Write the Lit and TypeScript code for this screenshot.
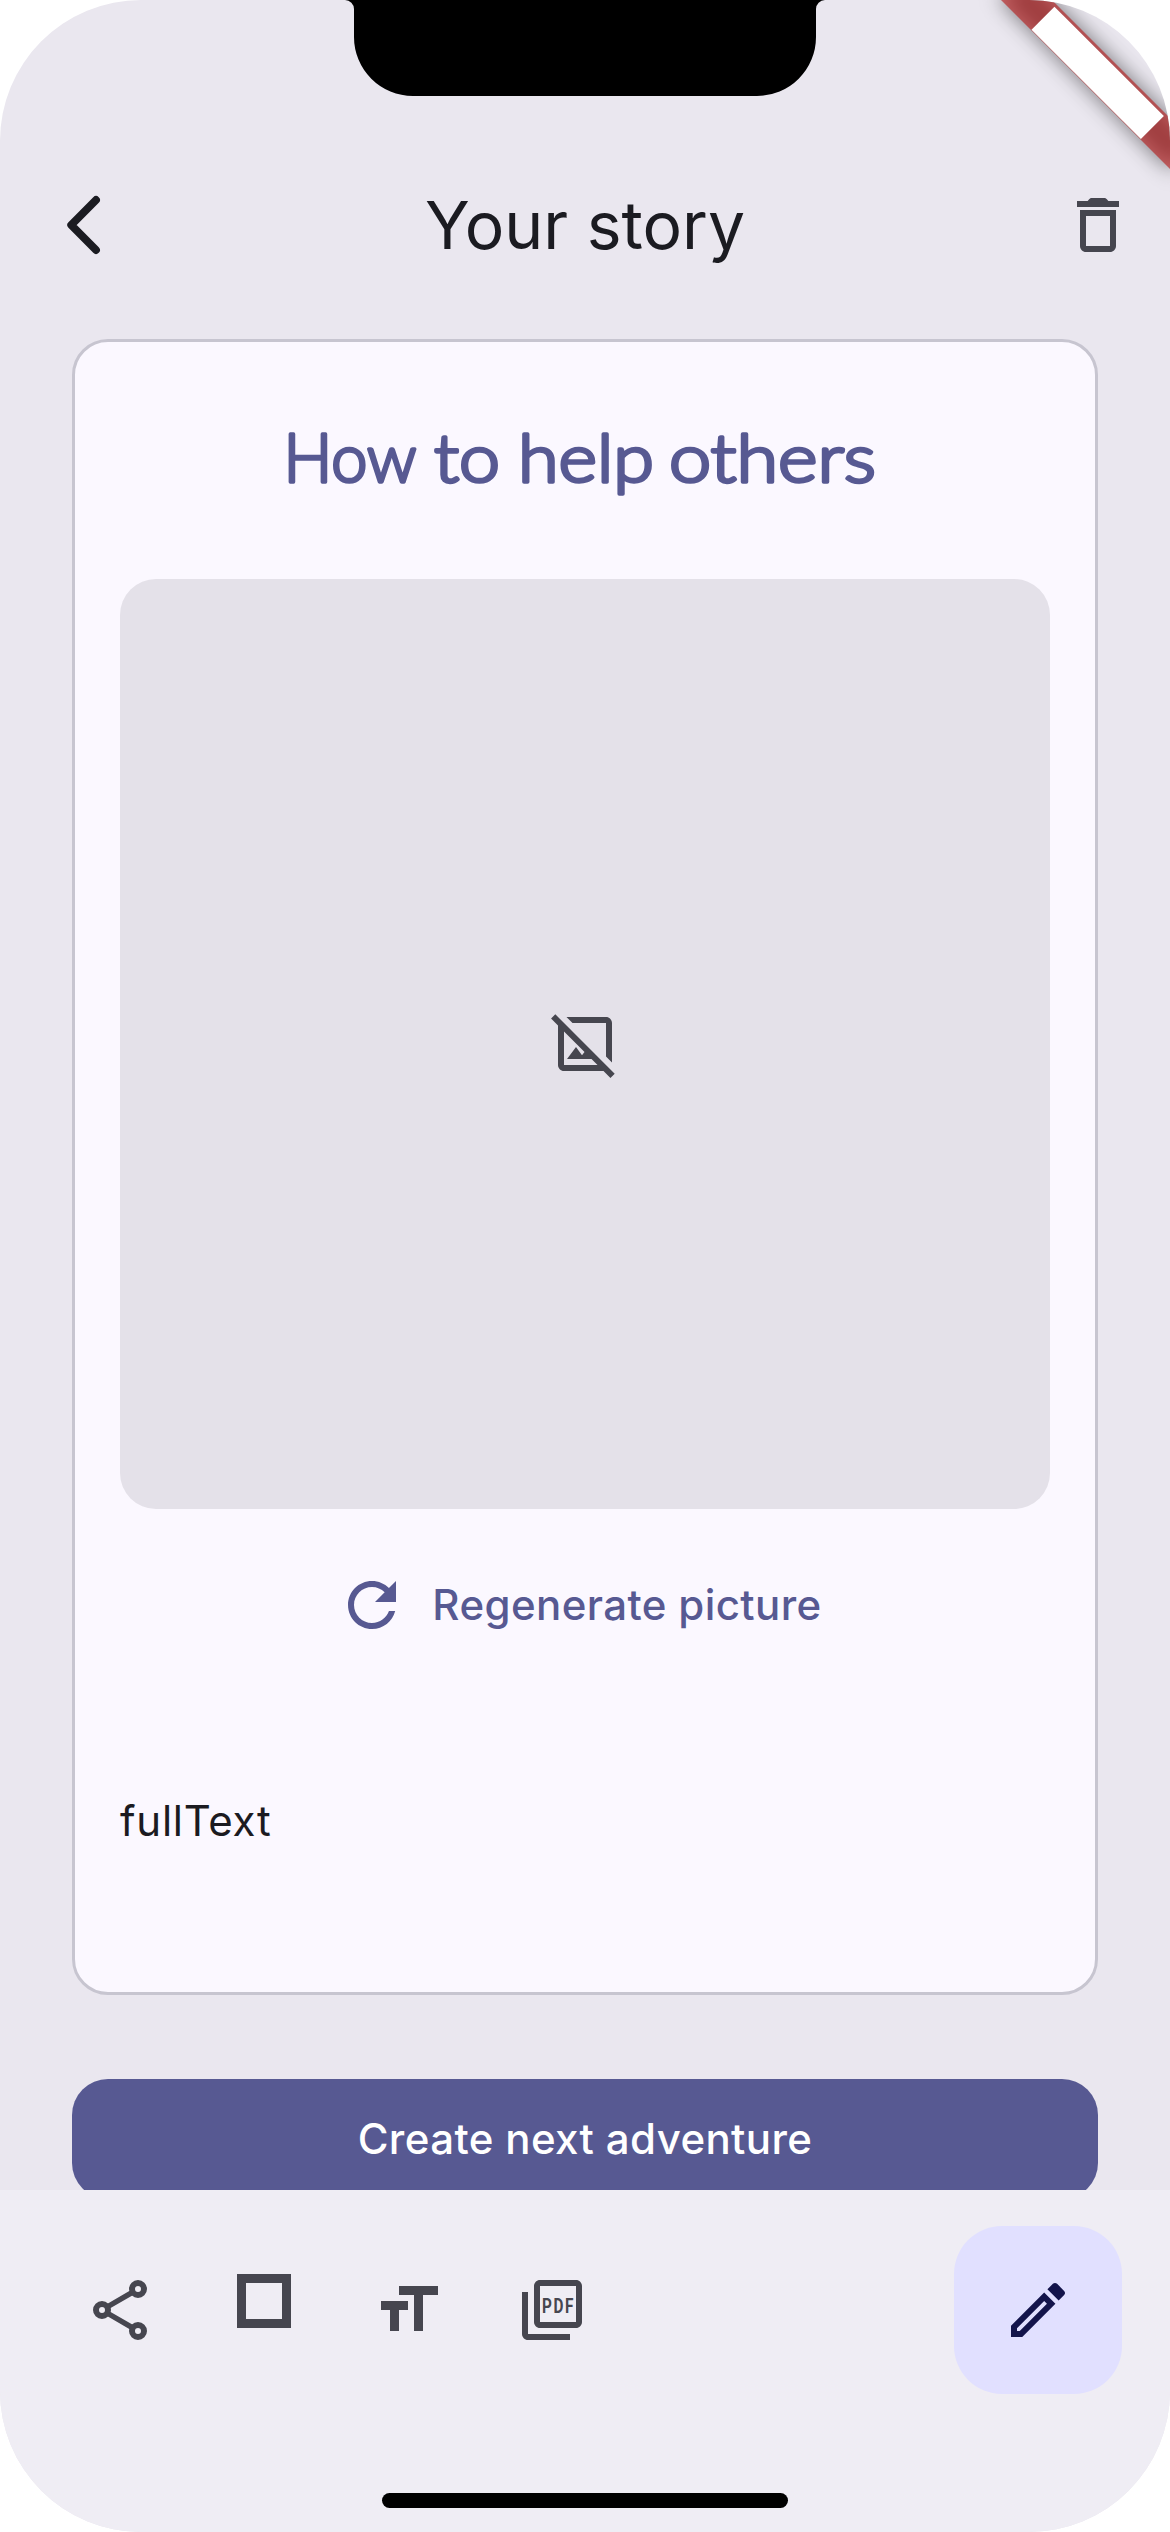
import { LitElement, html, css, svg } from "lit";
import { customElement, property } from "lit/decorators.js";

const icons: Record<string, unknown> = {
  back: svg`<path d="M15.67 3.67 7.4 12l8.27 8.33" fill="none" stroke="currentColor" stroke-width="2.6" stroke-linecap="round" stroke-linejoin="round"/>`,
  trash: svg`<path d="M6 19c0 1.1.9 2 2 2h8c1.1 0 2-.9 2-2V7H6v12zM8 9h8v10H8V9z"/><path d="M5 4h3.55l.5-.55C9.3 3.15 9.6 3 10 3h4c.4 0 .7.15.95.45l.5.55H19v2H5z"/>`,
  noImage: svg`<path d="M21.9 21.9l-8.49-8.49-9.82-9.82L2.1 2.1.69 3.51 3 5.83V19c0 1.1.9 2 2 2h13.17l2.31 2.31 1.42-1.41zM5 19V7.83l6.84 6.84-.84 1.05L9 13l-3 4h8.17l2 2H5zM7.83 5l-2-2H19c1.1 0 2 .9 2 2v13.17l-2-2V5H7.83z"/>`,
  refresh: svg`<path d="M17.65 6.35C16.2 4.9 14.21 4 12 4c-4.42 0-7.99 3.58-7.99 8s3.57 8 7.99 8c3.73 0 6.84-2.55 7.73-6h-2.08c-.82 2.33-3.04 4-5.65 4-3.31 0-6-2.69-6-6s2.69-6 6-6c1.66 0 3.14.69 4.22 1.78L13 11h7V4l-2.35 2.35z"/>`,
  share: svg`<g fill="none" stroke="currentColor"><path d="M16.4 5.95 7.7 11M16.4 18.05 7.7 13" stroke-width="1.8"/><g stroke-width="2"><circle cx="18" cy="5" r="2"/><circle cx="6" cy="12" r="2"/><circle cx="18" cy="19" r="2"/></g></g>`,
  square: svg`<rect x="4.5" y="1.5" width="15" height="15" fill="none" stroke="currentColor" stroke-width="3"/>`,
  textSize: svg`<rect x="9" y="4" width="13" height="3"/><rect x="14" y="4" width="3" height="15"/><rect x="3" y="9" width="9" height="3"/><rect x="6" y="9" width="3" height="10"/>`,
  pdf: svg`<path d="M20 2H8c-1.1 0-2 .9-2 2v12c0 1.1.9 2 2 2h12c1.1 0 2-.9 2-2V4c0-1.1-.9-2-2-2zm0 14H8V4h12v12zM4 6H2v14c0 1.1.9 2 2 2h14v-2H4V6z"/><g transform="scale(.74 1)"><text class="pdf" x="11.75" y="13">PDF</text></g>`,
  edit: svg`<path d="M14.06 9.02l.92.92L5.92 19H5v-.92l9.06-9.06M17.66 3c-.25 0-.51.1-.7.29l-1.83 1.83 3.75 3.75 1.83-1.83c.39-.39.39-1.02 0-1.41l-2.34-2.34c-.2-.2-.45-.29-.71-.29zm-3.6 3.19L3 17.25V21h3.75L17.81 9.94l-3.75-3.75z"/>`,
};

@customElement("app-icon")
export class AppIcon extends LitElement {
  @property() name = "";

  static styles = css`
    :host { display: block; width: 72px; height: 72px; flex: none; }
    .glyph { display: block; width: 72px; height: 72px; fill: currentColor; }
    .pdf { font: 700 6.9px Roboto, "Liberation Sans", sans-serif; letter-spacing: 0.7px; }
  `;

  render() {
    return html`<svg class="glyph" viewBox="0 0 24 24">${icons[this.name]}</svg>`;
  }
}

const titleWords = [
  { text: "How", x: 163.5, width: 133 },
  { text: "to", x: 314, width: 66 },
  { text: "help", x: 398, width: 136 },
  { text: "others", x: 549, width: 207 },
];

@customElement("app-root")
export class AppRoot extends LitElement {
  static styles = css`
    :host { display: block; background: #fff; }
    .screen {
      position: relative; width: 1170px; height: 2532px; box-sizing: border-box;
      display: flex; flex-direction: column; overflow: hidden; padding-top: 141px;
      border-radius: 141px; background: #eae7ef; color: #1b1b21;
      font-family: Inter, "Liberation Sans", sans-serif; font-size: 42px;
    }
    .overlay { position: absolute; top: 0; left: 0; display: block; pointer-events: none; }
    .ribbon-shadow { filter: blur(10.9px); }
    .appbar {
      flex: none; height: 168px; display: grid; grid-template-columns: 72px 1fr 72px;
      align-items: center; padding: 0 36px 0 49px;
    }
    .heading { margin: 0; text-align: center; font-size: 66px; font-weight: 400; line-height: 84px; padding-right: 13px; }
    .muted { color: #46464f; }
    .content {
      flex: 1; min-height: 0; overflow: hidden; display: flex; flex-direction: column;
      gap: 84px; padding: 30px 72px 0;
    }
    .card {
      flex: none; height: 1656px; box-sizing: border-box; display: flex; flex-direction: column;
      align-items: center; padding: 0 45px; border: 3px solid #c7c5d0; border-radius: 36px; background: #fbf8ff;
    }
    .title { display: block; flex: none; width: 930px; height: 237px; }
    .word {
      font: 300 67px Lato, "Open Sans", sans-serif; fill: #575992; stroke: #575992;
      stroke-width: 3.4px; stroke-linejoin: round;
    }
    .picture {
      flex: none; width: 930px; height: 930px; display: flex; align-items: center; justify-content: center;
      border-radius: 36px; background: #e4e1e9; color: #46464f;
    }
    .regenerate {
      display: flex; align-items: center; gap: 24px; height: 120px; margin-top: 36px; padding: 0 48px 0 36px;
      color: #575992; font-weight: 500; letter-spacing: 0.4px; white-space: nowrap;
    }
    .label { padding-bottom: 2px; }
    .story { align-self: stretch; margin: 126px 0 0; line-height: 60px; letter-spacing: 0.75px; }
    .next {
      flex: none; height: 120px; display: flex; align-items: center; justify-content: center;
      border-radius: 36px; background: #575992; color: #fff; font-weight: 500; letter-spacing: 0.38px;
    }
    .bottombar {
      flex: none; height: 342px; box-sizing: border-box; display: flex; align-items: flex-start;
      justify-content: space-between; padding: 36px 48px 0 84px; background: #efedf4;
    }
    .actions { display: flex; gap: 72px; padding-top: 48px; color: #46464f; }
    .fab {
      width: 168px; height: 168px; display: flex; align-items: center; justify-content: center;
      border-radius: 48px; background: #e1e0ff; color: #13144b;
    }
    .home { position: absolute; left: 382px; bottom: 24px; width: 406px; height: 15px; border-radius: 8px; background: #000; }
  `;

  render() {
    return html`
      <div class="screen">
        <header class="appbar">
          <app-icon name="back"></app-icon>
          <h1 class="heading">Your story</h1>
          <app-icon class="muted" name="trash"></app-icon>
        </header>
        <main class="content">
          <section class="card">
            <svg class="title" viewBox="0 0 930 237">
              ${titleWords.map((w) => svg`<text class="word" x=${w.x} y="139.5" textLength=${w.width} lengthAdjust="spacingAndGlyphs">${w.text}</text>`)}
            </svg>
            <div class="picture"><app-icon name="noImage"></app-icon></div>
            <div class="regenerate"><app-icon name="refresh"></app-icon><span class="label">Regenerate picture</span></div>
            <p class="story">fullText</p>
          </section>
          <div class="next"><span class="label">Create next adventure</span></div>
        </main>
        <footer class="bottombar">
          <div class="actions">
            ${["share", "square", "textSize", "pdf"].map((n) => html`<app-icon name=${n}></app-icon>`)}
          </div>
          <div class="fab"><app-icon name="edit"></app-icon></div>
        </footer>
        <svg class="overlay" width="1170" height="220" viewBox="0 0 1170 220">
          <path d="M345 0a9 9 0 0 1 9 9V37a59 59 0 0 0 59 59H757a59 59 0 0 0 59-59V9a9 9 0 0 1 9-9z"/>
          <g transform="translate(1170 0) rotate(45)">
            <rect class="ribbon-shadow" x="-120" y="83.5" width="240" height="36" fill="#000" fill-opacity=".5"/>
            <rect x="-120" y="83.5" width="240" height="36" fill="#b71c1c" fill-opacity=".627"/>
            <rect x="-77" y="86.4" width="154.7" height="32.5" fill="#fff"/>
          </g>
        </svg>
        <div class="home"></div>
      </div>
    `;
  }
}
